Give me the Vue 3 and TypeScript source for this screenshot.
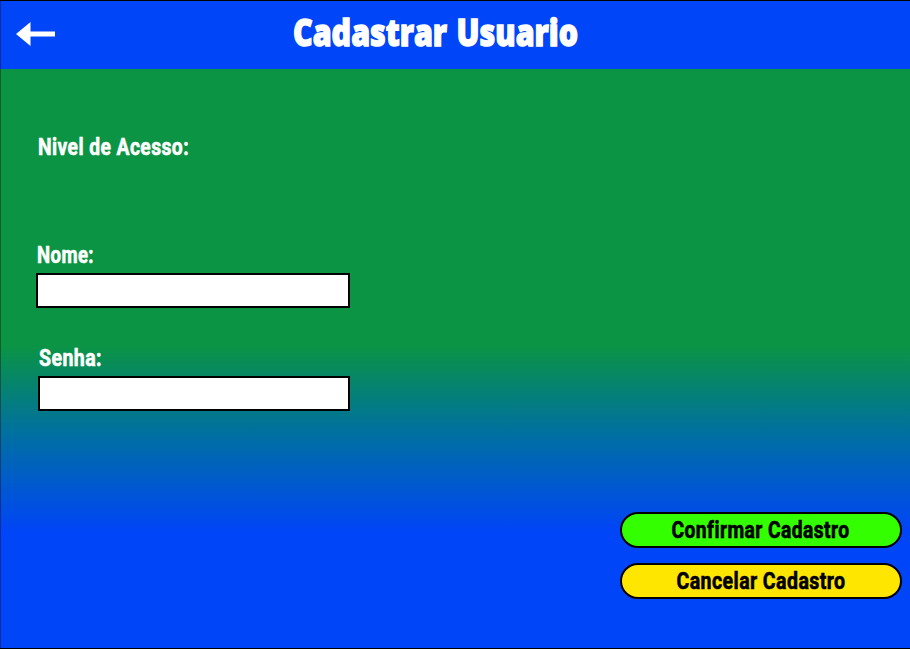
<script setup lang="ts">
import { ref } from 'vue'

interface Field {
  id: string
  label: string
  type: string
  labelWidth: number
}

const fields: Field[] = [
  { id: 'nome', label: 'Nome:', type: 'text', labelWidth: 57 },
  { id: 'senha', label: 'Senha:', type: 'password', labelWidth: 63 },
]
const values = ref<Record<string, string>>({ nome: '', senha: '' })

const actions = [
  { id: 'confirm', label: 'Confirmar Cadastro', width: 178 },
  { id: 'cancel', label: 'Cancelar Cadastro', width: 169 },
]
</script>

<template>
  <main class="screen">
    <header class="topbar">
      <svg class="back" width="40" height="26" viewBox="0 0 40 26">
        <path d="M0 13 14.5 1v9.6H39v5H14.5V25z" fill="#fff" />
      </svg>
      <svg class="title" width="300" height="54">
        <text x="1" y="37" textLength="285" lengthAdjust="spacingAndGlyphs">Cadastrar Usuario</text>
      </svg>
    </header>

    <form class="form" @submit.prevent>
      <svg class="label access" width="170" height="30">
        <text x="0" y="22" textLength="151" lengthAdjust="spacingAndGlyphs">Nivel de Acesso:</text>
      </svg>
      <div v-for="f in fields" :key="f.id" class="field" :class="f.id">
        <label :for="f.id">
          <svg class="label" width="100" height="30">
            <text x="1" y="22" :textLength="f.labelWidth" lengthAdjust="spacingAndGlyphs">{{ f.label }}</text>
          </svg>
        </label>
        <input :id="f.id" v-model="values[f.id]" :type="f.type" />
      </div>
    </form>

    <div class="actions">
      <button v-for="a in actions" :key="a.id" type="button" :class="a.id">
        <svg class="label" :width="a.width + 6" height="30">
          <text x="2.5" y="23" :textLength="a.width" lengthAdjust="spacingAndGlyphs">{{ a.label }}</text>
        </svg>
      </button>
    </div>
  </main>
</template>

<style>
body {
  margin: 0;
}
</style>

<style scoped>
.screen {
  box-sizing: border-box;
  width: 910px;
  height: 649px;
  display: flex;
  flex-direction: column;
  border: solid #000;
  border-width: 1px 0;
  box-shadow: inset 1px 0 rgba(0, 0, 0, 0.35);
  background: linear-gradient(#0b9444 344px, #0070a0 432px, #0045f7 530px);
  overflow: hidden;
}
svg {
  display: block;
  overflow: visible;
}
.topbar {
  box-sizing: border-box;
  height: 68px;
  flex: none;
  display: flex;
  align-items: flex-start;
  padding: 8px 0 0 16px;
  background: #0045f7;
  box-shadow: inset 1px 0 rgba(0, 0, 0, 0.35);
}
.back {
  margin-top: 12px;
}
.title {
  margin-left: 236px;
  font: 800 37.5px 'Open Sans', sans-serif;
  word-spacing: 2px;
  fill: #fff;
  stroke: #fff;
  stroke-width: 1.4px;
}
.label {
  font: 700 23.5px Roboto, sans-serif;
  font-variant-ligatures: none;
  letter-spacing: 0.5px;
  fill: #fff;
  stroke: #fff;
  stroke-width: 0.6px;
}
.form {
  display: flex;
  flex-direction: column;
  padding: 64px 0 0 36px;
}
.access {
  margin-left: 2px;
}
.field {
  display: flex;
  flex-direction: column;
  width: 314px;
}
.field.nome {
  margin-top: 78px;
}
.field.senha {
  width: 312px;
  margin: 36px 0 0 2px;
}
input {
  box-sizing: border-box;
  width: 100%;
  height: 35px;
  margin: 2px 0 0;
  padding: 0 8px;
  border: 2px solid #000;
  border-radius: 0;
  background: #fff;
  font: 18px Roboto, sans-serif;
  outline: none;
}
.actions {
  margin: auto 8px 49px auto;
  display: flex;
  flex-direction: column;
  gap: 15px;
}
button {
  box-sizing: border-box;
  width: 282px;
  height: 36px;
  padding: 0;
  display: flex;
  align-items: center;
  justify-content: center;
  border: 2px solid #000;
  border-radius: 18px;
  background: #3f0;
}
button .label {
  fill: #000;
  stroke: #000;
}
.cancel {
  background: #ffe600;
}
</style>
